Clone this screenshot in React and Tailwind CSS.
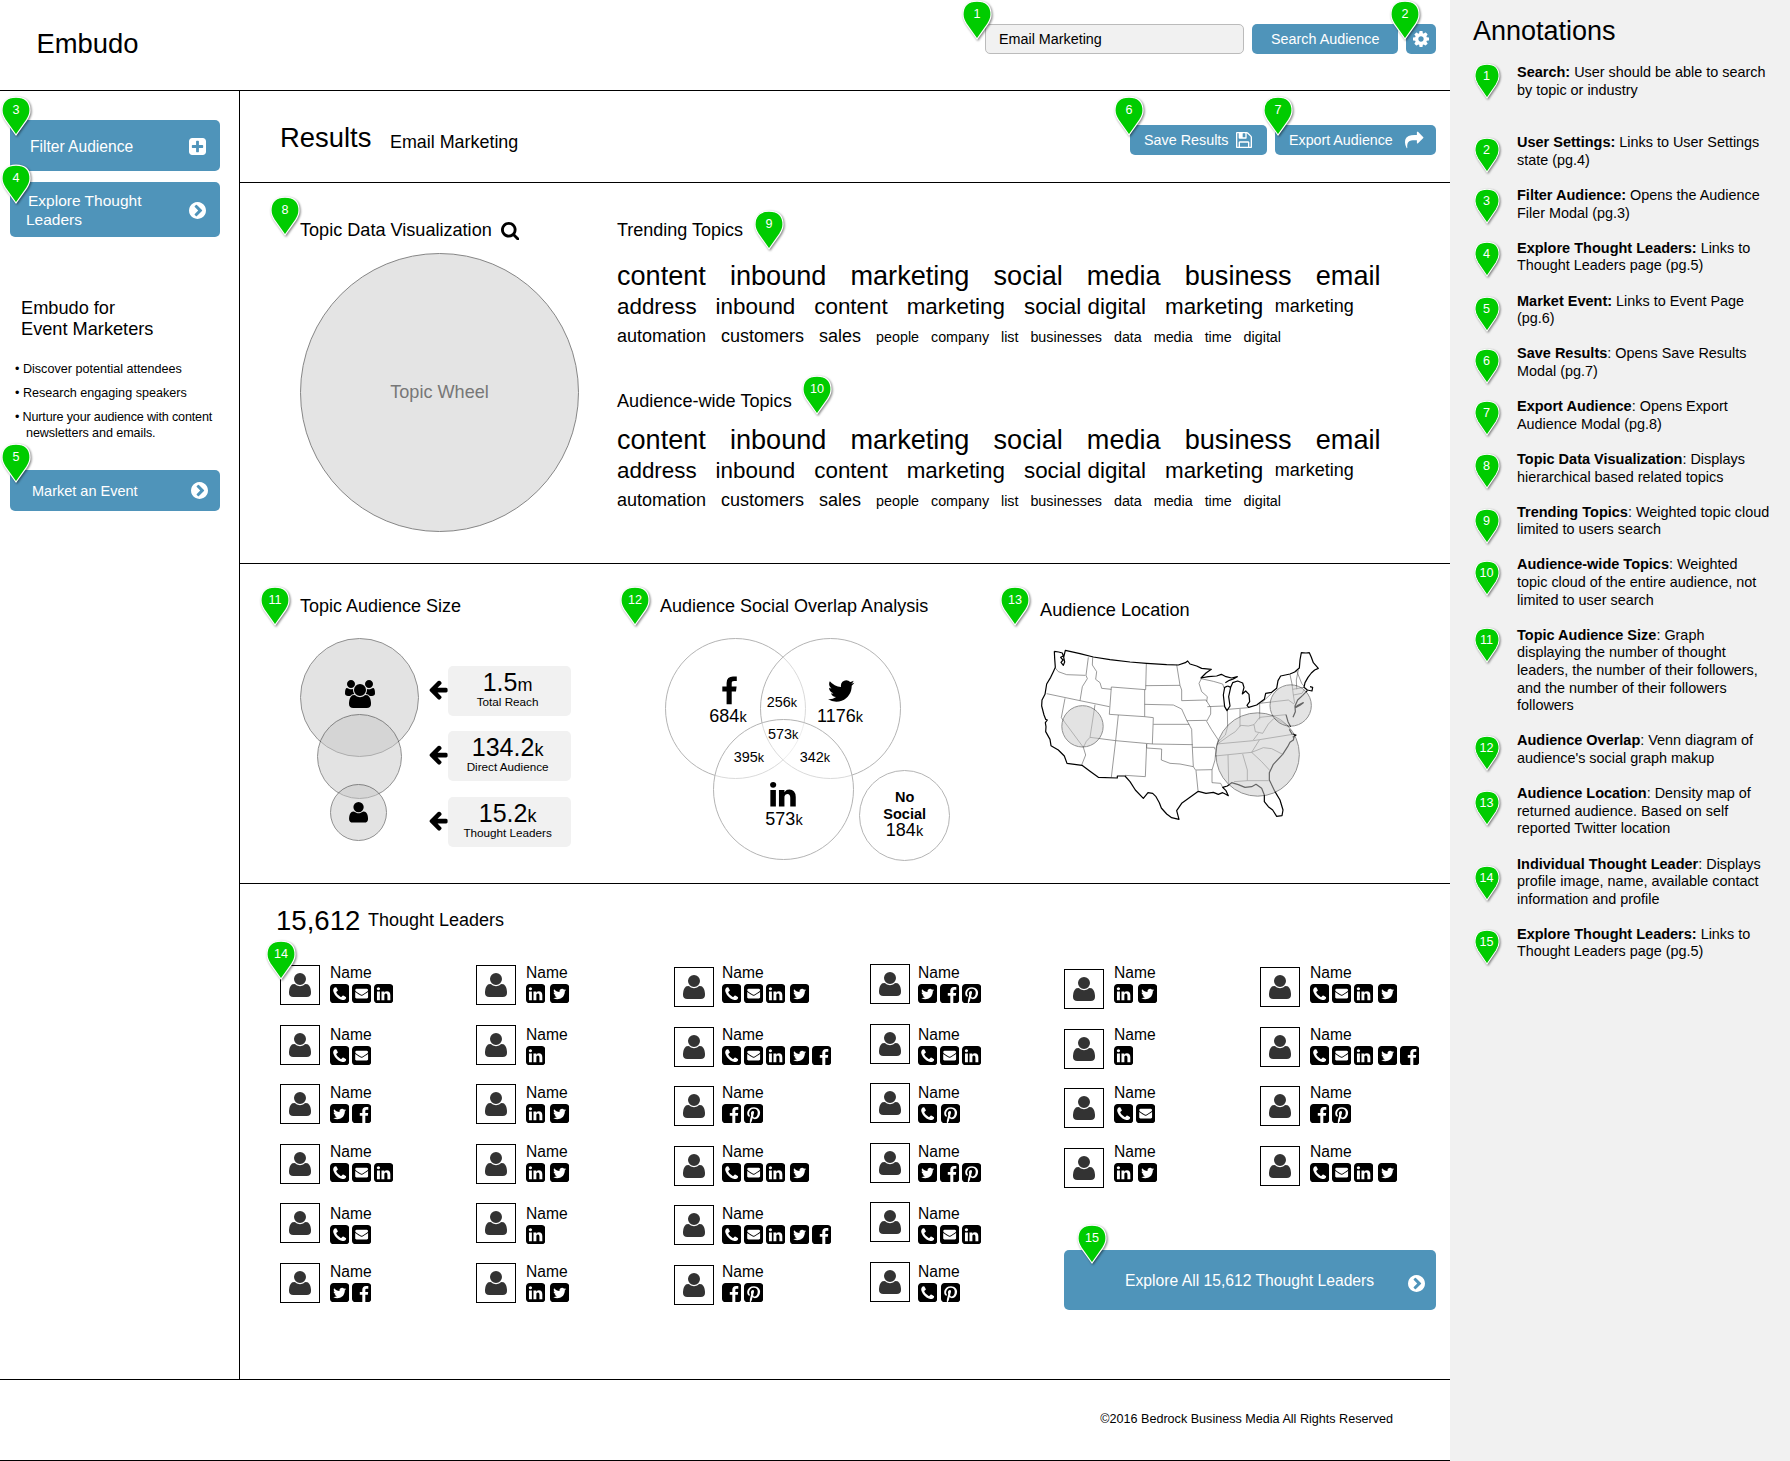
import React from "react";

const SQUARE =
  "M1664 416v960q0 119-84.5 203.5t-203.5 84.5h-960q-119 0-203.5-84.5t-84.5-203.5v-960q0-119 84.5-203.5t203.5-84.5h960q119 0 203.5 84.5t84.5 203.5z";

const ICONS = {
  twitterSquare:
    "M1408 610q-56 25-121 34 68-40 93-117-65 38-134 51-61-66-153-66-87 0-148.5 61.5t-61.5 148.5q0 29 5 48-129-7-242-65t-192-155q-29 50-29 106 0 114 91 175-47-1-100-26v1q0 75 50 133.5t123 72.5q-29 8-51 8-13 0-39-4 21 63 74.5 104t121.5 42q-116 90-261 90-26 0-50-3 148 94 322 94 112 0 210-35.5t168-95 120.5-137 75-162 24.5-168.5q0-18-1-27 63-45 105-109z" + SQUARE,
  facebookSquare:
    "M1376 128q119 0 203.5 84.5t84.5 203.5v960q0 119-84.5 203.5t-203.5 84.5h-188v-595h199l30-232h-229v-148q0-56 23.5-84t91.5-28l122-1v-207q-63-9-178-9-136 0-217.5 80t-81.5 226v171h-200v232h200v595h-532q-119 0-203.5-84.5t-84.5-203.5v-960q0-119 84.5-203.5t203.5-84.5h960z",
  linkedinSquare:
    "M365 1414h231v-694h-231v694zm246-908q-1-52-36-86t-93-34-94.5 34-36.5 86q0 51 35.5 85.5t92.5 34.5h1q59 0 95-34.5t36-85.5zm585 908h231v-398q0-154-73-233t-193-79q-136 0-209 117h2v-101h-231q3 66 0 694h231v-388q0-38 7-56 15-35 45-59.5t74-24.5q116 0 116 157v371z" + SQUARE,
  phoneSquare:
    "M1408 1193q0-11-2-16t-18-16.5-40.5-25-47.5-26.5-45.5-25-28.5-15q-5-3-19-13t-25-15-21-5q-15 0-36.5 20.5t-39.5 45-38.5 45-33.5 20.5q-7 0-16.5-3.5t-15.5-6.5-17-9.5-14-8.5q-99-55-170-126.5t-127-170.5q-2-3-8.5-14t-9.5-17-6.5-15.5-3.5-16.5q0-13 20.5-33.5t45-38.5 45-39.5 20.5-36.5q0-10-5-21t-15-25-13-19q-3-6-15-28.5t-25-45.5-26.5-47.5-25-40.5-16.5-18-16-2q-48 0-101 22-46 21-80 94.5t-34 130.5q0 16 2.5 34t5 30.5 9 33 10 29.5 12.5 33 11 30q60 164 216.5 320.5t320.5 216.5q6 2 30 11t33 12.5 29.5 10 33 9 30.5 5 34 2.5q57 0 130.5-34t94.5-80q22-53 22-101z" + SQUARE,
  envelopeSquare:
    "M1376 128q119 0 203.5 84.5t84.5 203.5v960q0 119-84.5 203.5t-203.5 84.5h-960q-119 0-203.5-84.5t-84.5-203.5v-960q0-119 84.5-203.5t203.5-84.5h960zm32 1056v-436q-31 35-64 55-34 22-132.5 85t-151.5 99q-98 69-164 69t-164-69q-46-32-141.5-92.5t-142.5-92.5q-12-8-33-27t-31-27v436q0 40 28 68t68 28h832q40 0 68-28t28-68zm0-573q0-41-27.5-70t-68.5-29h-832q-40 0-68 28t-28 68q0 37 30.5 76.5t67.5 64.5q47 32 137.5 89t129.5 83q3 2 17 11.5t21 14 21 13 23.5 13 21.5 9.5 22.5 7.5 20.5 2.5 20.5-2.5 22.5-7.5 21.5-9.5 23.5-13 21-13 21-14 17-11.5l267-174q35-23 66.5-62.5t31.5-73.5z",
  pinterestSquare:
    "M1376 128q119 0 203.5 84.5t84.5 203.5v960q0 119-84.5 203.5t-203.5 84.5h-725q85-122 108-210 9-34 53-209 21 39 73.5 67t112.5 28q181 0 295.5-147.5t114.5-373.5q0-84-35-162.5t-96.5-139-152.5-97-197-36.5q-104 0-194.5 28.5t-153 76.5-107.5 109.5-66.5 128-21.5 132.5q0 102 39.5 180t116.5 110q13 5 23.5 0t14.5-19q10-44 15-61 6-23-11-42-50-62-50-150 0-150 103.5-256.5t270.5-106.5q149 0 232.5 81t83.5 210q0 168-67.5 286t-173.5 118q-60 0-97-43.5t-23-103.5q8-34 26.5-92.5t29.5-102 11-74.5q0-49-26.5-81.5t-75.5-32.5q-61 0-103.5 56.5t-42.5 139.5q0 72 24 121l-98 414q-24 100-7 254h-183q-119 0-203.5-84.5t-84.5-203.5v-960q0-119 84.5-203.5t203.5-84.5h960z",
  plusSquare:
    "M1408 960v-128q0-26-19-45t-45-19h-320v-320q0-26-19-45t-45-19h-128q-26 0-45 19t-19 45v320h-320q-26 0-45 19t-19 45v128q0 26 19 45t45 19h320v320q0 26 19 45t45 19h128q26 0 45-19t19-45v-320h320q26 0 45-19t19-45z" + SQUARE,
  chevronCircle:
    "M845 1395l454-454q19-19 19-45t-19-45l-454-454q-19-19-45-19t-45 19l-102 102q-19 19-19 45t19 45l307 307-307 307q-19 19-19 45t19 45l102 102q19 19 45 19t45-19zm819-499q0 209-103 385.5t-279.5 279.5-385.5 103-385.5-103-279.5-279.5-103-385.5 103-385.5 279.5-279.5 385.5-103 385.5 103 279.5 279.5 103 385.5z",
  cog: "M1152 896q0-106-75-181t-181-75-181 75-75 181 75 181 181 75 181-75 75-181zm512-109v222q0 12-8 23t-20 13l-185 28q-19 54-39 91 35 50 107 138 10 12 10 25t-9 23q-27 37-99 108t-94 71q-12 0-26-9l-138-108q-44 23-91 38-16 136-29 186-7 28-36 28h-222q-14 0-24.5-8.5t-11.5-21.5l-28-184q-49-16-90-37l-141 107q-10 9-25 9-14 0-25-11-126-114-165-168-7-10-7-23 0-12 8-23 15-21 51-66.5t54-70.5q-27-50-41-99l-183-27q-13-2-21-12.5t-8-23.5v-222q0-12 8-23t19-13l186-28q14-46 39-92-40-57-107-138-10-12-10-24 0-10 9-23 26-36 98.5-107.5t94.5-71.5q13 0 26 10l138 107q44-23 91-38 16-136 29-186 7-28 36-28h222q14 0 24.5 8.5t11.5 21.5l28 184q49 16 90 37l142-107q9-9 24-9 13 0 25 10 129 119 165 170 7 8 7 22 0 12-8 23-15 21-51 66.5t-54 70.5q26 50 41 98l183 28q13 2 21 12.5t8 23.5z",
  search:
    "M1216 832q0-185-131.5-316.5t-316.5-131.5-316.5 131.5-131.5 316.5 131.5 316.5 316.5 131.5 316.5-131.5 131.5-316.5zm512 832q0 52-38 90t-90 38q-54 0-90-38l-343-342q-179 124-399 124-143 0-273.5-55.5t-225-150-150-225-55.5-273.5 55.5-273.5 150-225 225-150 273.5-55.5 273.5 55.5 225 150 150 225 55.5 273.5q0 220-124 399l343 343q37 37 37 90z",
  floppy:
    "M512 1536h768v-384h-768v384zm896 0h128v-896q0-14-10-38.5t-20-34.5l-281-281q-10-10-34-20t-39-10v416q0 40-28 68t-68 28h-576q-40 0-68-28t-28-68v-416h-128v1280h128v-416q0-40 28-68t68-28h832q40 0 68 28t28 68v416zm-384-928v-320q0-13-9.5-22.5t-22.5-9.5h-192q-13 0-22.5 9.5t-9.5 22.5v320q0 13 9.5 22.5t22.5 9.5h192q13 0 22.5-9.5t9.5-22.5zm640 32v928q0 40-28 68t-68 28h-1344q-40 0-68-28t-28-68v-1344q0-40 28-68t68-28h928q40 0 88 20t76 48l280 280q28 28 48 76t20 88z",
  share:
    "M1792 640q0 26-19 45l-512 512q-19 19-45 19t-45-19-19-45v-256h-224q-98 0-175.5 6t-154 21.5-133 42.5-105.5 69.5-80 101-48.5 138.5-17.5 181q0 55 5 123 0 6 2.5 23.5t2.5 26.5q0 15-8.5 25t-23.5 10q-16 0-28-17-7-9-13-22t-13.5-30-10.5-24q-127-285-127-451 0-199 53-333 162-403 875-403h224v-256q0-26 19-45t45-19 45 19l512 512q19 19 19 45z",
  arrowLeft:
    "M1664 896v128q0 53-32.5 90.5t-84.5 37.5h-704l293 294q38 36 38 90t-38 90l-75 76q-37 37-90 37-52 0-91-37l-651-652q-37-37-37-90 0-52 37-91l651-650q38-38 91-38 52 0 90 38l75 74q38 38 38 91t-38 91l-293 293h704q52 0 84.5 37.5t32.5 90.5z",
  facebook:
    "M1343 12v264h-157q-86 0-116 36t-30 108v189h293l-39 296h-254v759h-306v-759h-255v-296h255v-218q0-186 104-288.5t277-102.5q147 0 228 12z",
  twitter:
    "M1684 408q-67 98-162 167 1 14 1 42 0 130-38 259.5t-115.5 248.5-184.5 210.5-258 146-323 54.5q-271 0-496-145 35 4 78 4 225 0 401-138-105-2-188-64.5t-114-159.5q33 5 61 5 43 0 85-11-112-23-185.5-111.5t-73.5-205.5v-4q68 38 146 41-66-44-105-115t-39-154q0-88 44-163 121 149 294.5 238.5t371.5 99.5q-8-38-8-74 0-134 94.5-228.5t228.5-94.5q140 0 236 102 109-21 205-78-37 115-142 178 93-10 186-50z",
  linkedin:
    "M477 625v991h-330v-991h330zm21-306q1 73-50.5 122t-135.5 49h-2q-82 0-132-49t-50-122q0-74 51.5-122.5t134.5-48.5 133 48.5 51 122.5zm1166 729v568h-329v-530q0-105-40.5-164.5t-126.5-59.5q-63 0-105.5 34.5t-63.5 85.5q-11 30-11 81v553h-329q2-399 2-647t-1-296l-1-48h329v144h-2q20-32 41-56t56.5-52 87-43.5 114.5-15.5q171 0 275 113.5t104 332.5z",
  user: "M1600 1533q0 120-73 189.5t-194 69.5h-874q-121 0-194-69.5t-73-189.5q0-53 3.5-103.5t14-109 26.5-108.5 43-97.5 62-81 85.5-53.5 111.5-20q10 0 43 21.5t73 48 107 48 135 21.5 135-21.5 107-48 73-48 43-21.5q61 0 111.5 20t85.5 53.5 62 81 43 97.5 26.5 108.5 14 109 3.5 103.5zM1280 640q0 159-112.5 271.5t-271.5 112.5-271.5-112.5-112.5-271.5 112.5-271.5 271.5-112.5 271.5 112.5 112.5 271.5z",
  users:
    "M529 896q-162 5-265 128h-134q-82 0-138-40.5t-56-118.5q0-353 124-353 6 0 43.5 21t97.5 42.5 119 21.5q67 0 133-23-5 37-5 66 0 139 81 256zm1071 637q0 120-73 189.5t-194 69.5h-874q-121 0-194-69.5t-73-189.5q0-53 3.5-103.5t14-109 26.5-108.5 43-97.5 62-81 85.5-53.5 111.5-20q10 0 43 21.5t73 48 107 48 135 21.5 135-21.5 107-48 73-48 43-21.5q61 0 111.5 20t85.5 53.5 62 81 43 97.5 26.5 108.5 14 109 3.5 103.5zm-1024-1277q0 106-75 181t-181 75-181-75-75-181 75-181 181-75 181 75 75 181zm704 384q0 159-112.5 271.5t-271.5 112.5-271.5-112.5-112.5-271.5 112.5-271.5 271.5-112.5 271.5 112.5 112.5 271.5zm576 225q0 78-56 118.5t-138 40.5h-134q-103-123-265-128 81-117 81-256 0-29-5-66 66 23 133 23 59 0 119-21.5t97.5-42.5 43.5-21q124 0 124 353zm-128-609q0 106-75 181t-181 75-181-75-75-181 75-181 181-75 181 75 75 181z",
};

function Icon({ name, box = "128 128 1536 1536", className = "", ...rest }) {
  return (
    <svg viewBox={box} className={`shrink-0 fill-current ${className}`} {...rest}>
      <path d={ICONS[name]} />
    </svg>
  );
}

function Pin({ n, small = false, className = "" }) {
  return (
    <div className={`z-10 shrink-0 ${small ? "relative h-[34px] w-[24px]" : "absolute h-[38px] w-[28px]"} ${className}`}>
      <svg viewBox="0 0 28 38" preserveAspectRatio="none" className="absolute inset-0 h-full w-full overflow-visible drop-shadow-[1px_1px_1px_rgba(0,0,0,0.5)]">
        <path
          d="M14 38L3.4 23.2C1.2 19.8 0 17 0 13.6C0 4.8 5 .2 14 .2S28 4.8 28 13.6C28 17 26.8 19.8 24.6 23.2Z"
          fill="#00cc00"
          stroke="#fff"
          strokeWidth="1.2"
        />
      </svg>
      <span className={`absolute left-0 w-full text-center text-[12.6px] leading-4 text-white ${small ? "top-[4px]" : "top-[5px]"}`}>{n}</span>
    </div>
  );
}

const BLUE = "rounded-[5px] bg-[#4f94ba] text-white";

function Header() {
  return (
    <header className="flex h-[91px] border-b border-black">
      <h1 className="ml-[36.5px] mt-[28px] w-[948.5px] text-[27.4px] leading-8">Embudo</h1>
      <div className="mt-6 flex h-[30px] gap-2 text-[14.35px] leading-[30px]">
        <div className="relative w-[259px] rounded-[5px] border border-[#bbb] bg-[#f1f1f1] pl-[13px] leading-[29px]">
          Email Marketing
          <Pin n={1} className="-left-[23px] -top-[24px]" />
        </div>
        <button className={`w-[146px] pl-[19px] text-left ${BLUE}`}>Search Audience</button>
        <button className={`relative flex w-[30px] justify-center pt-[7px] ${BLUE}`}>
          <Icon name="cog" className="size-4" />
          <Pin n={2} className="-left-[15px] -top-[23px]" />
        </button>
      </div>
    </header>
  );
}

function Sidebar() {
  return (
    <aside className="w-[240px] shrink-0 border-r border-black pl-[10px] pt-[29px]">
      <button className={`relative flex h-[51px] w-[210px] items-start justify-between pl-[20px] pr-[14px] text-[15.6px] ${BLUE}`}>
        <span className="mt-[17px] leading-5">Filter Audience</span>
        <Icon name="plusSquare" className="mt-[18px] size-[17px]" />
        <Pin n={3} className="-left-[8px] -top-[23px]" />
      </button>
      <button className={`relative mt-[11px] flex h-[55px] w-[210px] items-start justify-between pl-[16px] pr-[14px] text-left text-[15.5px] ${BLUE}`}>
        <span className="mt-[9px] leading-[19px]">
          <span className="pl-[2px]">Explore Thought</span>
          <br />
          Leaders
        </span>
        <Icon name="chevronCircle" className="mt-[20px] size-[17px]" />
        <Pin n={4} className="-left-[8px] -top-[17px]" />
      </button>
      <h2 className="ml-[11px] mt-[61px] text-[18.2px] leading-[21px]">
        Embudo for
        <br />
        Event Marketers
      </h2>
      <ul className="ml-[5px] mt-[21px] flex flex-col gap-2 whitespace-nowrap text-[12.6px] leading-4">
        <li>• Discover potential attendees</li>
        <li>• Research engaging speakers</li>
        <li className="tracking-[-0.17px]">
          • Nurture your audience with content
          <br />
          <span className="pl-[11px] tracking-[-0.09px]">newsletters and emails.</span>
        </li>
      </ul>
      <button className={`relative mt-[29px] flex h-[41px] w-[210px] items-start justify-between pl-[22px] pr-[12px] text-[14.5px] ${BLUE}`}>
        <span className="mt-[11px] leading-5">Market an Event</span>
        <Icon name="chevronCircle" className="mt-[12px] size-[17px]" />
        <Pin n={5} className="-left-[8px] -top-[26px]" />
      </button>
    </aside>
  );
}

function ResultsBar() {
  return (
    <section className="flex h-[92px] border-b border-black pl-[40px]">
      <h2 className="mt-[31px] w-[110px] text-[27.4px] leading-8">Results</h2>
      <p className="mt-[41px] w-[740px] text-[17.9px] leading-5">Email Marketing</p>
      <div className="mt-[34px] flex h-[30px] gap-2 text-[14.35px] leading-[30px]">
        <button className={`relative flex w-[137px] pl-[14px] ${BLUE}`}>
          <span className="w-[92px] text-left">Save Results</span>
          <Icon name="floppy" className="mt-[7px] size-4" />
          <Pin n={6} className="-left-[15px] -top-[28px]" />
        </button>
        <button className={`relative flex w-[161px] pl-[14px] ${BLUE}`}>
          <span className="w-[116px] text-left text-[14.25px]">Export Audience</span>
          <Icon name="share" box="0 0 1792 1792" className="mt-[6px] size-[18.5px]" />
          <Pin n={7} className="-left-[11px] -top-[28px]" />
        </button>
      </div>
    </section>
  );
}

function TopicCloud() {
  return (
    <div className="whitespace-pre">
      <p className="text-[27.1px] leading-[30px] [word-spacing:0.5px]">{"content   inbound   marketing   social   media   business   email"}</p>
      <p className="mt-[3px] text-[22.4px] leading-[26px] [word-spacing:0.1px]">
        {"address   inbound   content   marketing   social digital   marketing "}
        <span className="align-[2px] text-[18px] leading-none"> marketing</span>
      </p>
      <p className="mt-[6px] text-[18px] leading-5">
        {"automation   customers   sales "}
        <span className="pl-[2px] text-[14.32px] leading-none">{"  people   company   list   businesses   data   media   time   digital"}</span>
      </p>
    </div>
  );
}

function Topics() {
  return (
    <section className="flex h-[381px] border-b border-black pl-[60px]">
      <div className="w-[317px] pt-[37px]">
        <div className="relative flex h-5 text-[18.1px] leading-5">
          <span className="w-[201px] whitespace-nowrap">Topic Data Visualization</span>
          <Icon name="search" box="64 128 1664 1664" className="mt-[2px] size-[18.4px]" />
          <Pin n={8} className="-left-[29px] -top-[23px]" />
        </div>
        <div className="mt-[13px] flex size-[279px] items-center justify-center rounded-full border border-[#868686] bg-[#e4e4e4] pb-[1px] text-[18.1px] leading-5 text-[#777]">
          Topic Wheel
        </div>
      </div>
      <div className="pt-[37px] text-[18px]">
        <h3 className="relative leading-5">
          Trending Topics
          <Pin n={9} className="left-[138px] -top-[9px]" />
        </h3>
        <div className="mt-[21px]">
          <TopicCloud />
        </div>
        <h3 className="relative mt-[45px] text-[18.1px] leading-5">
          Audience-wide Topics
          <Pin n={10} className="left-[186px] -top-[15px]" />
        </h3>
        <div className="mt-[14px]">
          <TopicCloud />
        </div>
      </div>
    </section>
  );
}

const STATS = [
  ["1.5", "m", "Total Reach", "mb-[15px]"],
  ["134.2", "k", "Direct Audience", "mb-[16px]"],
  ["15.2", "k", "Thought Leaders", ""],
];

function AudienceSize() {
  return (
    <div className="w-[360px] pt-[32px]">
      <h3 className="relative text-[18px] leading-5">
        Topic Audience Size
        <Pin n={11} className="-left-[39px] -top-[9px]" />
      </h3>
      <div className="flex">
        <svg viewBox="300 636 128 210" className="mt-5 h-[210px] w-[128px] shrink-0">
          <g fill="#c9c9c9" stroke="#222">
            <circle cx="359.5" cy="697.5" r="59" opacity=".5" />
            <circle cx="359.5" cy="756.5" r="42" opacity=".5" />
            <circle cx="358.5" cy="812.5" r="28" opacity=".5" />
          </g>
          <path transform="translate(346 680) scale(.015625)" d={ICONS.users} />
          <path transform="translate(346.5 798.5) scale(.01345)" d={ICONS.user} />
        </svg>
        <ul className="mt-[50px]">
          {STATS.map(([value, unit, label, gap]) => (
            <li key={label} className={`flex h-[50px] ${gap}`}>
              <Icon name="arrowLeft" box="64 128 1600 1664" className="mt-[14px] h-[20.4px] w-[19.6px]" />
              <div className="w-[123px] rounded-[5px] bg-[#f1f1f1] pr-[3px] pt-[2px] text-center">
                <div className="text-[25px] leading-[28px]">
                  {value}
                  <span className="text-[18px] leading-none">{unit}</span>
                </div>
                <div className="-mt-[1px] text-[11.7px] leading-[14px]">{label}</div>
              </div>
            </li>
          ))}
        </ul>
      </div>
    </div>
  );
}

const BIG = [
  ["684", 728, 721.7],
  ["1176", 840, 721.7],
  ["573", 784, 825.4],
  ["184", 904.5, 836.4],
];
const SMALL = [
  ["256", 782, 707],
  ["573", 783.2, 738.7],
  ["395", 749, 761.7],
  ["342", 815, 761.7],
];

function SocialOverlap() {
  return (
    <div className="w-[380px] pt-[32px]">
      <h3 className="relative text-[18px] leading-5">
        Audience Social Overlap Analysis
        <Pin n={12} className="-left-[39px] -top-[9px]" />
      </h3>
      <svg viewBox="660 636 300 230" className="mt-5 h-[230px] w-[300px]">
        <g fill="#fff" fillOpacity=".5" stroke="#b4b4b4">
          <circle cx="735.5" cy="708.5" r="70" />
          <circle cx="830.5" cy="708.5" r="70" />
          <circle cx="783.5" cy="789.5" r="70" />
          <circle cx="904.5" cy="815.5" r="45" />
        </g>
        <path transform="translate(714.3 676.4) scale(.01674)" d={ICONS.facebook} />
        <path transform="translate(826.2 676) scale(.01674)" d={ICONS.twitter} />
        <path transform="translate(767.9 779.5) scale(.01674)" d={ICONS.linkedin} />
        <g textAnchor="middle">
          {BIG.map(([v, x, y]) => (
            <text key={v} x={x} y={y} fontSize="18">
              {v}
              <tspan fontSize="14.5">k</tspan>
            </text>
          ))}
          {SMALL.map(([v, x, y]) => (
            <text key={v} x={x} y={y} fontSize="14.4">
              {v}
              <tspan fontSize="12.6">k</tspan>
            </text>
          ))}
          <text x="904.7" y="802.3" fontSize="14.5" fontWeight="700">No</text>
          <text x="904.7" y="819" fontSize="14.5" fontWeight="700">Social</text>
        </g>
      </svg>
    </div>
  );
}

const COAST =
  "M163 214L176 216L187 219L190 228L182 232L189 240L183 247L190 256L194 246L191 232L196 211L240 221L280 231L330 239L390 246L440 250L500 254L535 255L556 248L563 243L570 252L590 258L605 265L634 268L618 279L603 294L625 290L650 288L664 283L678 290L695 294L712 290L700 297L688 301L676 308M163 214L164 235L166 262L160 275L152 292L140 312L135 343L126 360L125 378L132 405L137 418L142 420L136 428L138 440L137 455L150 478L153 497L175 510L193 528L201 550L246 556L270 574L295 592L352 594L352 588L375 588L390 605L406 630L430 655L444 638L458 640L468 650L478 668L484 684L500 702L515 713L537 718L530 692L545 670L570 652L595 634L618 640L640 637L655 643L668 638L676 642L685 647L678 632L668 622L682 618L695 608L715 614L735 622L755 620L768 613L785 625L793 645L793 665L805 680L818 690L830 709L846 707L849 690L840 660L825 635L808 600L808 578L820 553L848 523L863 500L870 487L880 480L883 468M683 318L674 322L670 345L674 380L681 392L690 378L686 350L692 322L683 318M692 322L698 308L713 303L728 309L732 322L727 342L737 333L747 343L749 365L741 376L746 382L770 375L793 358L797 340L815 337L830 325L834 302L842 288L870 282L884 276L898 264L900 240L904 218L918 219L928 218L934 232L940 248L955 265L944 270L934 279L924 292L915 308L912 322L922 330L936 333L938 322L930 320M922 332L908 346L893 360L885 378L886 395L879 412M884 383L895 375L910 368L900 376L885 384M858 404L864 425L872 440M868 448L876 462L888 465L878 472";
const STATES =
  "M166 264L175 275L200 284L256 286M265 232L258 286L262 296L247 320L240 362M278 232L277 255L290 275L287 298L300 308L305 325L334 328M334 321L437 329M439 251L437 329M437 317L540 316M530 254L540 316L545 330L545 362M434 373L520 375L545 387M545 362L618 360M605 294L597 310L605 335L622 350L620 365M334 321L328 403L434 410L434 329M140 341L240 362L328 380M195 355L184 413L250 502L259 484L270 472M285 374L270 472M270 472L347 482L458 492L578 494M355 405L347 482L334 592M434 410L460 413L457 492M460 433L568 433M545 387L560 420L575 448L577 503L580 560L588 572L594 632M560 422L620 421M618 360L632 382L632 402L620 424L634 448L655 480L648 505L645 540L636 570L636 608L662 610L668 622M440 492L440 504L485 507L484 540L510 550L540 552L580 560M440 492L436 590L375 586M588 570L636 569M577 502L643 502L645 508M250 502L257 525L245 555M603 296L640 304L668 312L672 324M622 380L672 378M682 392L683 440L676 465L655 485M720 387L720 440M684 388L745 383M779 370L779 418M779 370L865 360L882 372M779 412L858 404M655 490L690 465L706 455L722 436L745 438L762 434L779 412M650 492L760 482L884 462M645 528L755 517L778 480M684 525L686 610M728 522L742 570L742 602M702 605L742 602L806 602M755 517L785 545L810 572M755 517L790 503L815 506L848 523M762 434L766 455L788 460L805 432L822 415L850 428L866 440M785 368L815 340M760 480L775 460M870 284L876 312L880 345L884 370M895 270L889 300L890 328M889 270L905 310L912 318M878 328L912 322M880 345L906 340L912 330";

function AudienceLocation() {
  return (
    <div className="pt-[36px]">
      <h3 className="relative text-[18.2px] leading-5">
        Audience Location
        <Pin n={13} className="-left-[39px] -top-[13px]" />
      </h3>
      <svg viewBox="120 192 900 540" className="mt-6 h-[180px] w-[300px]" fill="none" strokeLinejoin="round">
        <path d={STATES} stroke="#666" strokeWidth="2" />
        <path d={COAST} stroke="#000" strokeWidth="3.6" />
        <g fill="#c9c9c9" stroke="#222" strokeWidth="3">
          <circle cx="247.5" cy="439" r="62" opacity=".5" />
          <circle cx="773" cy="523.5" r="125" opacity=".5" />
          <circle cx="872" cy="376.5" r="62" opacity=".5" />
        </g>
      </svg>
    </div>
  );
}

const P = "phoneSquare";
const E = "envelopeSquare";
const L = "linkedinSquare";
const T = "twitterSquare";
const F = "facebookSquare";
const R = "pinterestSquare";

const COLUMNS = [
  { width: "w-[196px]", avatar: "w-[50px] pt-[3px]", rows: [[P, E, L], [P, E], [T, F], [P, E, L], [P, E], [T, F]] },
  { width: "w-[198px]", avatar: "w-[50px] pt-[3px]", rows: [[L, T], [L], [L, T], [L, T], [L], [L, T]] },
  { width: "w-[196px]", avatar: "w-[48px] pt-[5px]", rows: [[P, E, L, T], [P, E, L, T, F], [F, R], [P, E, L, T], [P, E, L, T, F], [F, R]] },
  { width: "w-[194px]", avatar: "w-[48px] pt-[2px]", rows: [[T, F, R], [P, E, L], [P, R], [T, F, R], [P, E, L], [P, R]] },
];
const LAST_COLUMNS = [
  { width: "w-[196px]", avatar: "w-[50px] pt-[7px]", rows: [[L, T], [L], [P, E], [L, T]] },
  { width: "w-[176px]", avatar: "w-[50px] pt-[5px]", rows: [[P, E, L, T], [P, E, L, T, F], [F, R], [P, E, L, T]] },
];
const ROW_HEIGHTS = ["h-[62px]", "h-[58px]", "h-[59px]", "h-[62px]", "h-[58px]", "h-[58px]"];

function LeaderColumn({ width, avatar, rows }) {
  return (
    <div className={`flex shrink-0 ${width}`}>
      <div className={`shrink-0 ${avatar}`}>
        {rows.map((_, i) => (
          <div key={i} className="flex size-10 items-center justify-center border border-black bg-white text-[#333] odd:mb-5 even:mb-[19px]">
            <Icon name="user" box="192 256 1408 1536" className="h-6 w-[22px]" />
          </div>
        ))}
      </div>
      <div className="pt-[1px]">
        {rows.map((icons, i) => (
          <div key={i} className={ROW_HEIGHTS[i]}>
            <p className="text-[15.6px] leading-5">Name</p>
            <div className="mt-[1.2px] flex gap-[2.8px]">
              {icons.map((name, k) => (
                <Icon
                  key={name}
                  name={name}
                  className={`size-[19.3px] ${name === T && icons[k - 1] === L ? "ml-[1.8px]" : ""} ${name === R && icons[k - 1] === P ? "ml-[0.8px]" : ""}`}
                />
              ))}
            </div>
          </div>
        ))}
      </div>
    </div>
  );
}

function ThoughtLeaders() {
  return (
    <section className="pt-[21px]">
      <div className="flex h-[57px] pl-[36px]">
        <span className="w-[92px] text-[27.6px] leading-8">15,612</span>
        <h3 className="mt-[5px] text-[18px] leading-5">Thought Leaders</h3>
      </div>
      <div className="relative flex pl-[40px]">
        <Pin n={14} className="-top-[21px] left-[27px]" />
        {COLUMNS.map((c, i) => (
          <LeaderColumn key={i} {...c} />
        ))}
        <div>
          <div className="flex h-[288px]">
            {LAST_COLUMNS.map((c, i) => (
              <LeaderColumn key={i} {...c} />
            ))}
          </div>
          <button className={`relative flex h-[60px] w-[372px] pl-[61px] text-[15.7px] ${BLUE}`}>
            <span className="mt-[21px] w-[283px] text-left leading-5">Explore All 15,612 Thought Leaders</span>
            <Icon name="chevronCircle" className="mt-[25px] size-[17px]" />
            <Pin n={15} className="-top-[25px] left-[14px]" />
          </button>
        </div>
      </div>
    </section>
  );
}

const NOTES = [
  ["Search:", [" User should be able to search", "by topic or industry", "\u00a0"], "mt-0"],
  ["User Settings:", [" Links to User Settings", "state (pg.4)"], "mt-[4px]"],
  ["Filter Audience:", [" Opens the Audience", "Filer Modal (pg.3)"], "mt-[2px]"],
  ["Explore Thought Leaders:", [" Links to", "Thought Leaders page (pg.5)"], "mt-[2px]"],
  ["Market Event:", [" Links to Event Page", "(pg.6)"], "mt-[4.5px]"],
  ["Save Results", [": Opens Save Results", "Modal (pg.7)"], "mt-[4px]"],
  ["Export Audience", [": Opens Export", "Audience Modal (pg.8)"], "mt-[3.3px]"],
  ["Topic Data Visualization", [": Displays", "hierarchical based related topics"], "mt-[3px]"],
  ["Trending Topics", [": Weighted topic cloud", "limited to users search"], "mt-[5.3px]"],
  ["Audience-wide Topics", [": Weighted", "topic cloud of the entire audience, not", "limited to user search"], "mt-[5px]"],
  ["Topic Audience Size", [": Graph", "displaying the number of thought", "leaders, the number of their followers,", "and the number of their followers", "followers"], "mt-[1.6px]"],
  ["Audience Overlap", [": Venn diagram of", "audience's social graph makup"], "mt-[4px]"],
  ["Audience Location", [": Density map of", "returned audience. Based on self", "reported Twitter location"], "mt-[6.3px]"],
  ["Individual Thought Leader", [": Displays", "profile image, name, available contact", "information and profile"], "mt-[10px]"],
  ["Explore Thought Leaders:", [" Links to", "Thought Leaders page (pg.5)"], "mt-[4px]"],
];

function Annotations() {
  return (
    <aside className="w-[340px] shrink-0 bg-[#f1f1f1] pt-[15px]">
      <h2 className="ml-[23px] text-[27px] leading-8">Annotations</h2>
      <ol className="mt-[17px] flex flex-col gap-[17.59px] text-[14.4px] leading-[17.593px]">
        {NOTES.map(([title, lines, pin], i) => (
          <li key={i} className="flex items-start">
            <div className="h-0 w-[67px] shrink-0 pl-[24.5px]">
              <Pin n={i + 1} small className={pin} />
            </div>
            <p className="whitespace-pre">
              <b className="text-[14.5px] leading-none">{title}</b>
              {lines.map((line, k) => (
                <React.Fragment key={k}>
                  {k > 0 && <br />}
                  {line}
                </React.Fragment>
              ))}
            </p>
          </li>
        ))}
      </ol>
    </aside>
  );
}

export default function App() {
  return (
    <div className="flex h-[1461px] w-[1790px] overflow-hidden bg-white font-['Liberation_Sans',Arial,sans-serif] text-black">
      <div className="w-[1450px] shrink-0">
        <Header />
        <div className="flex h-[1289px] border-b border-black">
          <Sidebar />
          <main className="w-[1210px]">
            <ResultsBar />
            <Topics />
            <section className="flex h-[320px] border-b border-black pl-[60px]">
              <AudienceSize />
              <SocialOverlap />
              <AudienceLocation />
            </section>
            <ThoughtLeaders />
          </main>
        </div>
        <footer className="h-[81px] border-b border-black pr-[57px] pt-[29px] text-right text-[12.6px] leading-5">
          ©2016 Bedrock Business Media All Rights Reserved
        </footer>
      </div>
      <Annotations />
    </div>
  );
}
